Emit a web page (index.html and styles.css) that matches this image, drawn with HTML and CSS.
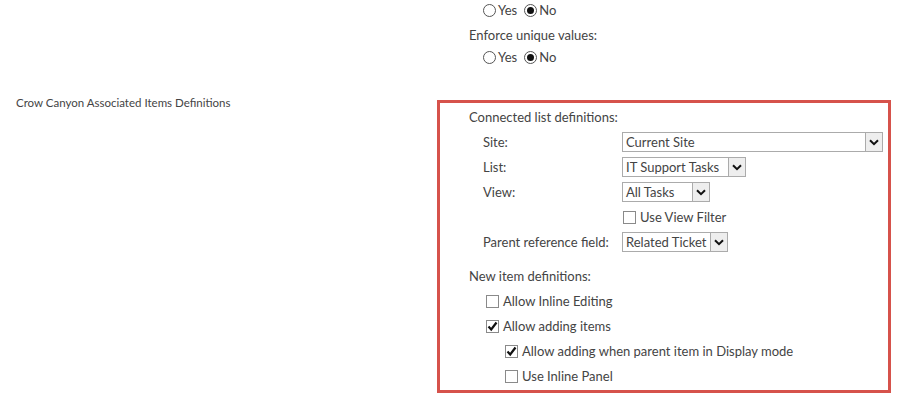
FILE: index.html
```html
<!DOCTYPE html>
<html lang="en">
<head>
  <meta charset="UTF-8">
  <title>List Settings</title>
  <link rel="stylesheet" href="styles.css">
</head>
<body>
  <div class="form-table">
    <div class="form-row">
      <div class="label-cell"></div>
      <div class="body-cell top-fields">
        <div class="choice-line">
          <span class="radio"></span><span class="choice-text">Yes</span>
          <span class="radio checked"></span><span class="choice-text">No</span>
        </div>
        <div class="field-title">Enforce unique values:</div>
        <div class="choice-line">
          <span class="radio"></span><span class="choice-text">Yes</span>
          <span class="radio checked"></span><span class="choice-text">No</span>
        </div>
      </div>
    </div>

    <div class="form-row section-row">
      <div class="label-cell section-label">Crow Canyon Associated Items Definitions</div>
      <div class="body-cell">
        <div class="highlight-box">
          <div class="field-title">Connected list definitions:</div>

          <div class="def-row">
            <div class="def-label">Site:</div>
            <div class="dropdown dd-site"><span class="dd-value">Current Site</span><span class="dd-arrow"><svg width="10" height="7" viewBox="0 0 10 7"><path d="M1 1.2 L5 5.2 L9 1.2" fill="none" stroke="#111" stroke-width="2"/></svg></span></div>
          </div>
          <div class="def-row">
            <div class="def-label">List:</div>
            <div class="dropdown dd-list"><span class="dd-value">IT Support Tasks</span><span class="dd-arrow"><svg width="10" height="7" viewBox="0 0 10 7"><path d="M1 1.2 L5 5.2 L9 1.2" fill="none" stroke="#111" stroke-width="2"/></svg></span></div>
          </div>
          <div class="def-row">
            <div class="def-label">View:</div>
            <div class="dropdown dd-view"><span class="dd-value">All Tasks</span><span class="dd-arrow"><svg width="10" height="7" viewBox="0 0 10 7"><path d="M1 1.2 L5 5.2 L9 1.2" fill="none" stroke="#111" stroke-width="2"/></svg></span></div>
          </div>
          <div class="def-row">
            <div class="def-label"></div>
            <div class="check-inline"><span class="checkbox"></span><span class="choice-text">Use View Filter</span></div>
          </div>
          <div class="def-row">
            <div class="def-label">Parent reference field:</div>
            <div class="dropdown dd-parent"><span class="dd-value">Related Ticket</span><span class="dd-arrow"><svg width="10" height="7" viewBox="0 0 10 7"><path d="M1 1.2 L5 5.2 L9 1.2" fill="none" stroke="#111" stroke-width="2"/></svg></span></div>
          </div>

          <div class="field-title new-items">New item definitions:</div>
          <div class="check-line">
            <span class="checkbox"></span><span class="choice-text">Allow Inline Editing</span>
          </div>
          <div class="check-line">
            <span class="checkbox checked"><svg width="11" height="11" viewBox="0 0 11 11"><path d="M1.5 5.5 L4.2 8.5 L9.5 1.5" fill="none" stroke="#111" stroke-width="2.2"/></svg></span><span class="choice-text">Allow adding items</span>
          </div>
          <div class="check-line sub">
            <span class="checkbox checked"><svg width="11" height="11" viewBox="0 0 11 11"><path d="M1.5 5.5 L4.2 8.5 L9.5 1.5" fill="none" stroke="#111" stroke-width="2.2"/></svg></span><span class="choice-text">Allow adding when parent item in Display mode</span>
          </div>
          <div class="check-line sub">
            <span class="checkbox"></span><span class="choice-text">Use Inline Panel</span>
          </div>
        </div>
      </div>
    </div>
  </div>
</body>
</html>
```

FILE: styles.css
```css
body {
  margin: 0;
  padding: 0;
  background-color: #fff;
  color: #444;
  font-family: Lato, 'Open Sans', sans-serif;
  font-size: 13px;
}
.form-table {
  display: flex;
  flex-direction: column;
}
.form-row {
  display: grid;
  grid-template-columns: 437px 454px;
}
.label-cell {
  padding-left: 16px;
  line-height: 20px;
}
.top-fields {
  padding-left: 32px;
}
.section-row {
  margin-top: 26px;
}
.section-label {
  font-size: 11.5px;
}
.field-title {
  height: 20px;
  line-height: 20px;
  margin-top: 5px;
}
.choice-line {
  display: flex;
  align-items: center;
  height: 20px;
  margin-top: 2px;
  padding-left: 14px;
}
.choice-line:first-child {
  margin-top: 0;
}
.choice-text {
  line-height: 20px;
  white-space: nowrap;
}
.radio {
  width: 13px;
  height: 13px;
  box-sizing: border-box;
  border: 1px solid #555;
  border-radius: 50%;
  margin-right: 2px;
  display: flex;
  align-items: center;
  justify-content: center;
}
.radio + .choice-text {
  margin-right: 7px;
}
.radio.checked::after {
  content: "";
  width: 7px;
  height: 7px;
  border-radius: 50%;
  background-color: #111;
}
.highlight-box {
  margin-top: 7px;
  border: 3px solid #d6524b;
  padding: 4px 0 4px 29px;
}
.highlight-box > .field-title:first-child {
  margin-top: 0;
}
.def-row {
  display: flex;
  align-items: center;
  height: 20px;
  margin-top: 5px;
}
.def-label {
  width: 153px;
  padding-left: 14px;
  flex-shrink: 0;
  box-sizing: border-box;
  white-space: nowrap;
}
.dropdown {
  display: flex;
  align-items: stretch;
  height: 20px;
  box-sizing: border-box;
  border: 1px solid #ababab;
  background-color: #fff;
}
.dd-value {
  flex: 1;
  padding-left: 3px;
  line-height: 18px;
  white-space: nowrap;
  overflow: hidden;
}
.dd-arrow {
  width: 16px;
  border-left: 1px solid #ababab;
  background-color: #eeeeee;
  display: flex;
  align-items: center;
  justify-content: center;
}
.dd-site { width: 261px; }
.dd-list { width: 124px; }
.dd-view { width: 88px; }
.dd-parent { width: 106px; }
.check-inline {
  display: flex;
  align-items: center;
  padding-left: 1px;
}
.checkbox {
  width: 13px;
  height: 13px;
  box-sizing: border-box;
  border: 1px solid #8a8a8a;
  background-color: #fff;
  margin-right: 4px;
  display: flex;
  align-items: center;
  justify-content: center;
  flex-shrink: 0;
}
.new-items {
  margin-top: 14px;
}
.check-line {
  display: flex;
  align-items: center;
  height: 20px;
  margin-top: 5px;
  padding-left: 17px;
}
.check-line.sub {
  padding-left: 36px;
}
```
